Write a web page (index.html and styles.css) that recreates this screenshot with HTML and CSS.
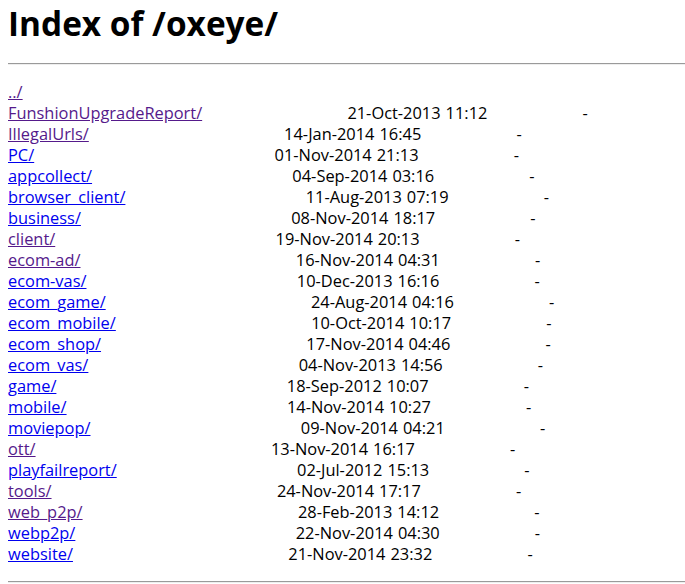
FILE: index.html
```html
<!DOCTYPE html>
<html>
<head>
<meta charset="UTF-8">
<title>Index of /oxeye/</title>
<link rel="stylesheet" href="styles.css">
</head>
<body>
<h1>Index of /oxeye/</h1><hr><pre><a class="seen" href="../">../</a>
<a class="seen" href="FunshionUpgradeReport/">FunshionUpgradeReport/</a>                             21-Oct-2013 11:12                   -
<a class="seen" href="IllegalUrls/">IllegalUrls/</a>                                       14-Jan-2014 16:45                   -
<a href="PC/">PC/</a>                                                01-Nov-2014 21:13                   -
<a href="appcollect/">appcollect/</a>                                        04-Sep-2014 03:16                   -
<a href="browser_client/">browser_client/</a>                                    11-Aug-2013 07:19                   -
<a href="business/">business/</a>                                          08-Nov-2014 18:17                   -
<a class="seen" href="client/">client/</a>                                            19-Nov-2014 20:13                   -
<a class="seen" href="ecom-ad/">ecom-ad/</a>                                           16-Nov-2014 04:31                   -
<a href="ecom-vas/">ecom-vas/</a>                                          10-Dec-2013 16:16                   -
<a href="ecom_game/">ecom_game/</a>                                         24-Aug-2014 04:16                   -
<a href="ecom_mobile/">ecom_mobile/</a>                                       10-Oct-2014 10:17                   -
<a href="ecom_shop/">ecom_shop/</a>                                         17-Nov-2014 04:46                   -
<a href="ecom_vas/">ecom_vas/</a>                                          04-Nov-2013 14:56                   -
<a href="game/">game/</a>                                              18-Sep-2012 10:07                   -
<a href="mobile/">mobile/</a>                                            14-Nov-2014 10:27                   -
<a href="moviepop/">moviepop/</a>                                          09-Nov-2014 04:21                   -
<a class="seen" href="ott/">ott/</a>                                               13-Nov-2014 16:17                   -
<a href="playfailreport/">playfailreport/</a>                                    02-Jul-2012 15:13                   -
<a class="seen" href="tools/">tools/</a>                                             24-Nov-2014 17:17                   -
<a class="seen" href="web_p2p/">web_p2p/</a>                                           28-Feb-2013 14:12                   -
<a href="webp2p/">webp2p/</a>                                            22-Nov-2014 04:30                   -
<a href="website/">website/</a>                                           21-Nov-2014 23:32                   -
</pre><hr></body>
</html>
```

FILE: styles.css
```css
body {
    margin: 0 0 0 8px;
    background: #fff;
    color: #000;
    font-family: "Open Sans", "Noto Sans", sans-serif;
    overflow: hidden;
}

h1 {
    font-size: 33.4px;
    font-weight: bold;
    line-height: 42px;
    margin: 0 0 19px;
    padding-top: 2px;
}

hr {
    margin: 0;
    border: 0;
    border-top: 1px solid #9a9a9a;
    border-bottom: 1px solid #eee;
    height: 0;
}

pre {
    font-family: "Open Sans", "Noto Sans", sans-serif;
    font-size: 16.4px;
    line-height: 21px;
    word-spacing: 0.75px;
    margin: 16px 0 17px;
}

a {
    color: #0000ee;
}

a.seen {
    color: #551a8b;
}
```
